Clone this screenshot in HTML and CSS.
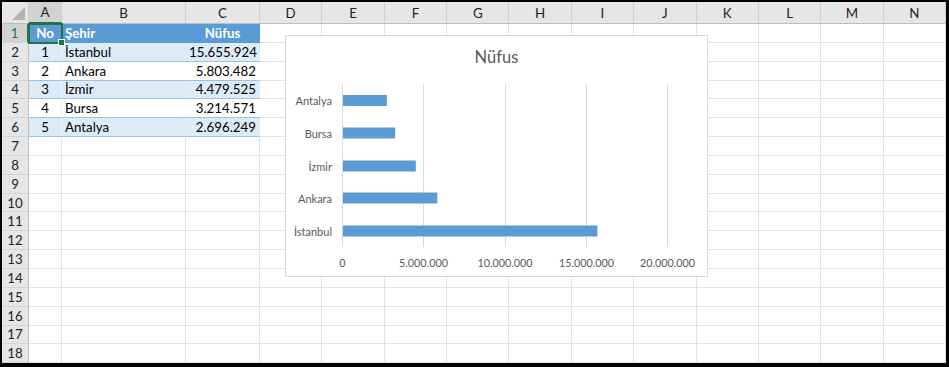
FILE: index.html
```html
<!DOCTYPE html>
<html lang="tr">
<head>
    <meta charset="utf-8" />
    <title>Nüfus</title>
    <link rel="stylesheet" href="styles.css">
</head>
<body>

    <div class="sheet">
        <table class="grid">
            <colgroup>
                <col class="col-rh">
                <col class="col-a">
                <col class="col-b">
                <col class="col-c">
                <col span="11" class="col-n">
            </colgroup>
            <thead>
                <tr>
                    <th class="corner"></th>
                    <th class="active">A</th>
                    <th>B</th>
                    <th>C</th>
                    <th>D</th>
                    <th>E</th>
                    <th>F</th>
                    <th>G</th>
                    <th>H</th>
                    <th>I</th>
                    <th>J</th>
                    <th>K</th>
                    <th>L</th>
                    <th>M</th>
                    <th>N</th>
                </tr>
            </thead>
            <tbody>
                <tr class="head-row">
                    <th class="active">1</th>
                    <td class="center sel">No</td>
                    <td>Şehir</td>
                    <td class="center">Nüfus</td>
                    <td></td><td></td><td></td><td></td><td></td><td></td><td></td><td></td><td></td><td></td><td></td>
                </tr>
                <tr class="band">
                    <th>2</th>
                    <td class="center">1</td>
                    <td>İstanbul</td>
                    <td class="num">15.655.924</td>
                    <td></td><td></td><td></td><td></td><td></td><td></td><td></td><td></td><td></td><td></td><td></td>
                </tr>
                <tr class="plain">
                    <th>3</th>
                    <td class="center">2</td>
                    <td>Ankara</td>
                    <td class="num">5.803.482</td>
                    <td></td><td></td><td></td><td></td><td></td><td></td><td></td><td></td><td></td><td></td><td></td>
                </tr>
                <tr class="band">
                    <th>4</th>
                    <td class="center">3</td>
                    <td>İzmir</td>
                    <td class="num">4.479.525</td>
                    <td></td><td></td><td></td><td></td><td></td><td></td><td></td><td></td><td></td><td></td><td></td>
                </tr>
                <tr class="plain">
                    <th>5</th>
                    <td class="center">4</td>
                    <td>Bursa</td>
                    <td class="num">3.214.571</td>
                    <td></td><td></td><td></td><td></td><td></td><td></td><td></td><td></td><td></td><td></td><td></td>
                </tr>
                <tr class="band">
                    <th>6</th>
                    <td class="center">5</td>
                    <td>Antalya</td>
                    <td class="num">2.696.249</td>
                    <td></td><td></td><td></td><td></td><td></td><td></td><td></td><td></td><td></td><td></td><td></td>
                </tr>
                <tr><th>7</th><td></td><td></td><td></td><td></td><td></td><td></td><td></td><td></td><td></td><td></td><td></td><td></td><td></td><td></td></tr>
                <tr><th>8</th><td></td><td></td><td></td><td></td><td></td><td></td><td></td><td></td><td></td><td></td><td></td><td></td><td></td><td></td></tr>
                <tr><th>9</th><td></td><td></td><td></td><td></td><td></td><td></td><td></td><td></td><td></td><td></td><td></td><td></td><td></td><td></td></tr>
                <tr><th>10</th><td></td><td></td><td></td><td></td><td></td><td></td><td></td><td></td><td></td><td></td><td></td><td></td><td></td><td></td></tr>
                <tr><th>11</th><td></td><td></td><td></td><td></td><td></td><td></td><td></td><td></td><td></td><td></td><td></td><td></td><td></td><td></td></tr>
                <tr><th>12</th><td></td><td></td><td></td><td></td><td></td><td></td><td></td><td></td><td></td><td></td><td></td><td></td><td></td><td></td></tr>
                <tr><th>13</th><td></td><td></td><td></td><td></td><td></td><td></td><td></td><td></td><td></td><td></td><td></td><td></td><td></td><td></td></tr>
                <tr><th>14</th><td></td><td></td><td></td><td></td><td></td><td></td><td></td><td></td><td></td><td></td><td></td><td></td><td></td><td></td></tr>
                <tr><th>15</th><td></td><td></td><td></td><td></td><td></td><td></td><td></td><td></td><td></td><td></td><td></td><td></td><td></td><td></td></tr>
                <tr><th>16</th><td></td><td></td><td></td><td></td><td></td><td></td><td></td><td></td><td></td><td></td><td></td><td></td><td></td><td></td></tr>
                <tr><th>17</th><td></td><td></td><td></td><td></td><td></td><td></td><td></td><td></td><td></td><td></td><td></td><td></td><td></td><td></td></tr>
                <tr><th>18</th><td></td><td></td><td></td><td></td><td></td><td></td><td></td><td></td><td></td><td></td><td></td><td></td><td></td><td></td></tr>
            </tbody>
        </table>

        <!-- floating chart object -->
        <div class="chart">
            <svg width="423" height="242" viewBox="0 0 423 242">
                <text class="chart-title" x="211.5" y="28">Nüfus</text>

                <g class="gridlines">
                    <line x1="57.5" y1="49" x2="57.5" y2="212" />
                    <line x1="138.5" y1="49" x2="138.5" y2="212" />
                    <line x1="220.5" y1="49" x2="220.5" y2="212" />
                    <line x1="301.5" y1="49" x2="301.5" y2="212" />
                    <line x1="382.5" y1="49" x2="382.5" y2="212" />
                </g>

                <g class="bars">
                    <rect x="58" y="60" width="43.8" height="11" />
                    <rect x="58" y="92.5" width="52.2" height="11" />
                    <rect x="58" y="125.5" width="72.8" height="11" />
                    <rect x="58" y="157.5" width="94.3" height="11" />
                    <rect x="58" y="190.5" width="254.4" height="11" />
                </g>

                <g class="cat-labels">
                    <text x="47" y="65.5">Antalya</text>
                    <text x="47" y="98">Bursa</text>
                    <text x="47" y="131">İzmir</text>
                    <text x="47" y="163">Ankara</text>
                    <text x="47" y="196">İstanbul</text>
                </g>

                <g class="val-labels">
                    <text x="57.5" y="227.5">0</text>
                    <text x="138.5" y="227.5">5.000.000</text>
                    <text x="220" y="227.5">10.000.000</text>
                    <text x="301.5" y="227.5">15.000.000</text>
                    <text x="382.5" y="227.5">20.000.000</text>
                </g>
            </svg>
        </div>
    </div>

</body>
</html>
```
FILE: styles.css
```css
body {
    margin: 0;
    background-color: #fff;
    font-family: Lato, "Liberation Sans", sans-serif;
}

.sheet {
    position: relative;
    box-sizing: border-box;
    width: 949px;
    height: 367px;
    border: solid #000;
    border-width: 2px 3px 4px 2px;
    overflow: hidden;
    background-color: #fff;
}

.grid {
    table-layout: fixed;
    border-collapse: separate;
    border-spacing: 0;
    width: 944px;
    font-size: 13.3px;
    color: #000;
}

.col-rh { width: 27px; }
.col-a { width: 33px; }
.col-b { width: 124px; }
.col-c { width: 74px; }
.col-n { width: 62.36px; }

/* headers */
thead tr {
    height: 22px;
}

thead th {
    background-color: #e6e6e6;
    border-right: 1px solid #cfcfcf;
    border-bottom: 1px solid #bdbdbd;
    font-weight: normal;
    font-size: 13.3px;
    color: #222;
    padding: 0;
    text-align: center;
}

    thead th.active {
        background-color: #d2d2d2;
        border-bottom: 2px solid #217346;
        color: #1d1d1d;
    }

.corner {
    position: relative;
}

    .corner::after {
        content: "";
        position: absolute;
        right: 3px;
        bottom: 3px;
        width: 0;
        height: 0;
        border-left: 13px solid transparent;
        border-bottom: 13px solid #b4b4b4;
    }

tbody tr {
    height: 18.85px;
}

tbody th {
    background-color: #e6e6e6;
    border-right: 1px solid #bdbdbd;
    border-bottom: 1px solid #d4d4d4;
    font-weight: normal;
    font-size: 13.3px;
    color: #222;
    padding: 0;
    text-align: center;
}

    tbody th.active {
        background-color: #d2d2d2;
        border-right: 2px solid #217346;
        color: #217346;
    }

td {
    border-right: 1px solid #e1e1e1;
    border-bottom: 1px solid #e1e1e1;
    padding: 0 3px;
    white-space: nowrap;
    overflow: hidden;
    line-height: 16px;
}

.center {
    text-align: center;
}

.num {
    text-align: right;
}

/* formatted table A1:C6 */
.head-row td:nth-child(-n+4) {
    background-color: #5b9bd5;
    color: #fff;
    font-weight: bold;
    border-right-color: #5b9bd5;
    border-bottom-color: #5b9bd5;
}

.band td:nth-child(-n+4) {
    background-color: #ddebf7;
    border-right-color: #ddebf7;
    border-bottom-color: #9bc2e6;
}

.plain td:nth-child(-n+4) {
    border-right-color: #fff;
    border-bottom-color: #9bc2e6;
}

.band td:nth-child(2),
.plain td:nth-child(2) {
    border-right-color: #eef3fa;
}

.grid td.sel {
    position: relative;
    overflow: visible;
    outline: 2px solid #217346;
    outline-offset: -1px;
}

    .grid td.sel::after {
        content: "";
        position: absolute;
        right: -4px;
        bottom: -4px;
        width: 5px;
        height: 5px;
        background-color: #217346;
        border: 1px solid #fff;
        z-index: 1;
    }

/* chart */
.chart {
    position: absolute;
    left: 283px;
    top: 33px;
    width: 423px;
    height: 242px;
    box-sizing: border-box;
    border: 1px solid #d9d9d9;
    background-color: #fff;
}

    .chart svg {
        position: absolute;
        left: -1px;
        top: -1px;
        font-family: Lato, "Liberation Sans", sans-serif;
    }

.chart-title {
    font-size: 16.5px;
    fill: #595959;
    text-anchor: middle;
}

.gridlines line {
    stroke: #d9d9d9;
    stroke-width: 1;
}

.bars rect {
    fill: #5b9bd5;
}

.cat-labels text {
    font-size: 11px;
    fill: #595959;
    text-anchor: end;
    dominant-baseline: central;
}

.val-labels text {
    font-size: 10.8px;
    fill: #595959;
    text-anchor: middle;
    dominant-baseline: central;
}
```
